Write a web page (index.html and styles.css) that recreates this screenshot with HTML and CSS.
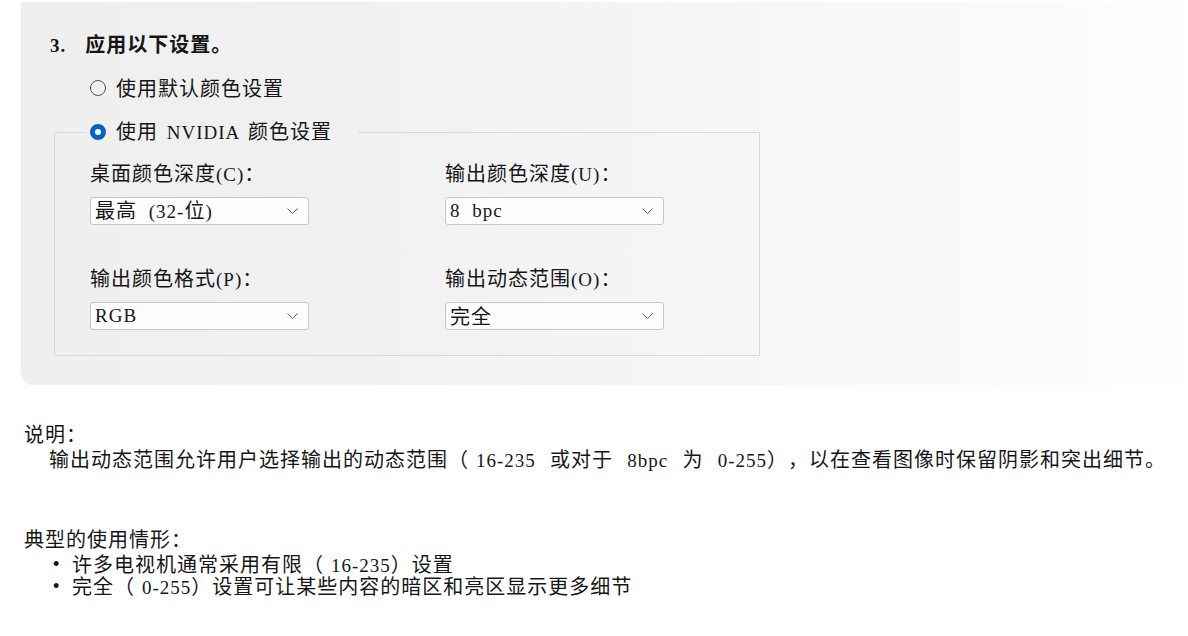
FILE: index.html
```html
<!DOCTYPE html>
<html lang="zh-CN">
<head>
<meta charset="utf-8">
<title>NVIDIA 颜色设置</title>
<link rel="stylesheet" href="styles.css">
</head>
<body>
<div class="panel">
  <div class="heading"><span class="l b">3.</span><span class="hgap"></span>应用以下设置。</div>
  <div class="radio-row">
    <span class="radio"></span>
    <span class="rlabel">使用默认颜色设置</span>
  </div>
  <fieldset class="group">
    <legend class="legend">
      <span class="radio checked"></span>
      <span class="rlabel">使用<span class="l tight"> NVIDIA </span>颜色设置</span>
    </legend>
    <div class="grid">
      <div class="field">
        <div class="flabel">桌面颜色深度<span class="l">(C)</span>：</div>
        <div class="select"><span>最高<span class="l"> (32-</span>位<span class="l">)</span></span><svg class="chev" width="11" height="6" viewBox="0 0 11 6"><path d="M0.5 0.5 L5.5 5.5 L10.5 0.5" fill="none" stroke="#5f5f5f" stroke-width="1"/></svg></div>
      </div>
      <div class="field">
        <div class="flabel">输出颜色深度<span class="l">(U)</span>：</div>
        <div class="select"><span class="l">8 bpc</span><svg class="chev" width="11" height="6" viewBox="0 0 11 6"><path d="M0.5 0.5 L5.5 5.5 L10.5 0.5" fill="none" stroke="#5f5f5f" stroke-width="1"/></svg></div>
      </div>
      <div class="field">
        <div class="flabel">输出颜色格式<span class="l">(P)</span>：</div>
        <div class="select"><span class="l">RGB</span><svg class="chev" width="11" height="6" viewBox="0 0 11 6"><path d="M0.5 0.5 L5.5 5.5 L10.5 0.5" fill="none" stroke="#5f5f5f" stroke-width="1"/></svg></div>
      </div>
      <div class="field">
        <div class="flabel">输出动态范围<span class="l">(O)</span>：</div>
        <div class="select"><span>完全</span><svg class="chev" width="11" height="6" viewBox="0 0 11 6"><path d="M0.5 0.5 L5.5 5.5 L10.5 0.5" fill="none" stroke="#5f5f5f" stroke-width="1"/></svg></div>
      </div>
    </div>
  </fieldset>
</div>

<div class="notes">
  <div class="line">说明：</div>
  <div class="line indent">输出动态范围允许用户选择输出的动态范围（<span class="l pp wide">16-235 </span>或对于<span class="l wide"> 8bpc </span>为<span class="l wide"> 0-255</span>），以在查看图像时保留阴影和突出细节。</div>
  <div class="line usage">典型的使用情形：</div>
  <ul class="list">
    <li><span class="bullet">•</span><span>许多电视机通常采用有限（<span class="l pp">16-235</span>）设置</span></li>
    <li><span class="bullet">•</span><span>完全（<span class="l pp">0-255</span>）设置可让某些内容的暗区和亮区显示更多细节</span></li>
  </ul>
</div>
</body>
</html>
```
FILE: styles.css
```css
html, body {
  margin: 0;
  padding: 0;
  background: #ffffff;
}

body {
  font-family: "Noto Sans CJK SC", "Noto Sans", sans-serif;
  font-size: 20px;
  letter-spacing: 1px;
  color: #161616;
  text-spacing-trim: space-all;
  white-space: nowrap;
}

.l {
  font-family: "Liberation Serif", "Noto Sans CJK SC", serif;
  font-size: 19px;
  letter-spacing: 1px;
  word-spacing: 6px;
}

.l.wide {
  word-spacing: 8.5px;
}

.l.tight {
  word-spacing: 3px;
}

.pp {
  margin-left: 7px;
}

.b {
  font-weight: bold;
}

.hgap {
  display: inline-block;
  width: 19px;
}

.panel {
  margin: 2px 0 0 21px;
  width: 1164px;
  box-sizing: border-box;
  padding: 30px 0 29px 0;
  background: linear-gradient(to right, #efefef 0%, #f1f1f1 30%, #f5f5f5 55%, #f9f9f9 78%, #fdfdfd 100%);
  border-radius: 0 0 0 12px;
  display: flex;
  flex-direction: column;
}

.heading {
  margin-left: 29px;
  line-height: 24px;
  height: 24px;
  font-weight: bold;
}

.radio-row {
  margin: 20px 0 0 69px;
  display: flex;
  align-items: center;
  height: 24px;
  line-height: 24px;
}

.radio {
  width: 16px;
  height: 16px;
  box-sizing: border-box;
  border: 1px solid #555555;
  border-radius: 50%;
  flex: none;
  margin-right: 10px;
}

.radio.checked {
  border: 5.5px solid #0067c0;
  background: #ffffff;
}

.rlabel {
  line-height: 24px;
}

.group {
  margin: 20px 0 0 33px;
  padding: 0 0 25px 0;
  width: 706px;
  box-sizing: border-box;
  border: 1px solid #d9d9d9;
  min-inline-size: 0;
}

.legend {
  margin-left: 31px;
  padding: 0 26px 0 4px;
  display: flex;
  align-items: center;
  height: 24px;
  line-height: 24px;
}

.grid {
  padding: 17px 0 0 35px;
  display: grid;
  grid-template-columns: 355px 219px;
  row-gap: 41px;
}

.field {
  display: flex;
  flex-direction: column;
  gap: 12px;
}

.flabel {
  line-height: 24px;
  height: 24px;
}

.select {
  width: 219px;
  height: 28px;
  box-sizing: border-box;
  border: 1px solid #c6c6c6;
  border-radius: 3px;
  background: #fdfdfd;
  display: flex;
  align-items: center;
  justify-content: space-between;
  padding: 0 10px 0 4px;
  line-height: 26px;
}

.chev {
  display: block;
  flex: none;
}

.notes {
  margin-top: 36px;
  padding-left: 24px;
}

.line {
  line-height: 25px;
  height: 25px;
}

.indent {
  padding-left: 25px;
}

.usage {
  margin-top: 55px;
}

.list {
  list-style: none;
  margin: 2px 0 0 0;
  padding: 0;
}

.list li {
  display: flex;
  line-height: 22px;
  height: 22px;
}

.bullet {
  font-family: "Liberation Sans", sans-serif;
  font-size: 18px;
  margin-left: 29px;
  width: 19px;
  letter-spacing: 0;
}
```
